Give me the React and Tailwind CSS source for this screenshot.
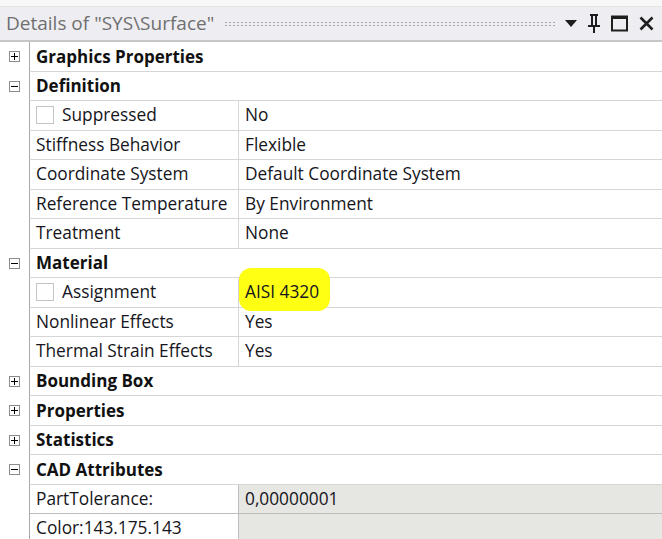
const rows = [
  { section: "Graphics Properties", open: false },
  { section: "Definition", open: true },
  { label: "Suppressed", value: "No", check: true },
  { label: "Stiffness Behavior", value: "Flexible" },
  { label: "Coordinate System", value: "Default Coordinate System" },
  { label: "Reference Temperature", value: "By Environment" },
  { label: "Treatment", value: "None" },
  { section: "Material", open: true },
  { label: "Assignment", value: "AISI 4320", check: true, marked: true },
  { label: "Nonlinear Effects", value: "Yes" },
  { label: "Thermal Strain Effects", value: "Yes" },
  { section: "Bounding Box", open: false },
  { section: "Properties", open: false },
  { section: "Statistics", open: false },
  { section: "CAD Attributes", open: true },
  { label: "PartTolerance:", value: "0,00000001", locked: true },
  { label: "Color:143.175.143", value: "", locked: true },
];

const ExpandBox = ({ open }) => (
  <div className="w-[11px] h-[11px] border border-[#8c8c8c] bg-white flex items-center justify-center">
    <svg width="9" height="9" viewBox="0 0 9 9">
      <rect x="1" y="4" width="7" height="1" fill="#000" />
      {!open && <rect x="4" y="1" width="1" height="7" fill="#000" />}
    </svg>
  </div>
);

const TitleIcons = () => (
  <div className="flex items-center gap-[11px] pr-[8px]">
    <svg width="12" height="7" viewBox="0 0 12 7">
      <path d="M0 0 H12 L6 7 Z" fill="#1e1e1e" />
    </svg>
    <svg width="12" height="19" viewBox="0 0 12 19">
      <rect x="2" y="0" width="8" height="2" fill="#1e1e1e" />
      <rect x="3" y="2" width="2" height="10" fill="#1e1e1e" />
      <rect x="7" y="2" width="2" height="10" fill="#1e1e1e" />
      <rect x="0" y="11" width="12" height="2" fill="#1e1e1e" />
      <rect x="5" y="13" width="2" height="6" fill="#1e1e1e" />
    </svg>
    <svg width="17" height="17" viewBox="0 0 17 17">
      <rect x="1" y="1.5" width="15" height="14" fill="none" stroke="#1e1e1e" strokeWidth="2" />
      <rect x="1" y="1" width="15" height="3" fill="#1e1e1e" />
    </svg>
    <svg width="15" height="15" viewBox="0 0 15 15">
      <path d="M1.5 1.5 L13.5 13.5 M13.5 1.5 L1.5 13.5" stroke="#1e1e1e" strokeWidth="2.6" />
    </svg>
  </div>
);

function Row({ row }) {
  if (row.section) {
    return (
      <div className="flex h-[29.5px]">
        <div className="w-[29px] shrink-0 flex items-center pl-[9px]">
          <ExpandBox open={row.open} />
        </div>
        <div className="flex-1 flex items-center border-l border-[#a8a8a8] border-b border-b-[#d6d6d6] pl-[6px] font-bold text-[17px] text-[#111]">
          {row.section}
        </div>
      </div>
    );
  }
  const line = row.locked ? "border-[#bdbdbd]" : "border-[#d6d6d6]";
  return (
    <div className="flex h-[29.5px]">
      <div className="w-[29px] shrink-0" />
      <div className={`flex-1 flex border-l border-l-[#a8a8a8] border-b ${line}`}>
        <div className={`w-[209px] shrink-0 flex items-center pl-[6px] border-r ${line}`}>
          {row.check && (
            <span className="w-[18px] h-[18px] border border-[#c4c4c4] bg-white mr-[8px]" />
          )}
          {row.label}
        </div>
        <div className={`relative flex-1 flex items-center pl-[6px] ${row.locked ? "bg-[#e6e6e3]" : ""}`}>
          {row.marked && (
            <span className="absolute left-0 top-[-10px] w-[91px] h-[43px] rounded-[12px] bg-[#ffff14] z-10" />
          )}
          <span className="relative z-20">{row.value}</span>
        </div>
      </div>
    </div>
  );
}

export default function App() {
  return (
    <div className="w-[662px] h-[539px] overflow-hidden bg-white text-[17.3px] text-[#151520] font-['Open_Sans',sans-serif]">
      <div className="h-[7px] bg-[#f7f7f7] border-b border-[#e4e4e4]" />
      <div className="h-[35px] flex items-center bg-[#eeeef2] border-b-2 border-[#c6c6c6] pl-[6px]">
        <span className="text-[#6f6f6f] text-[19px] whitespace-nowrap">Details of "SYS\Surface"</span>
        <div className="flex-1 ml-[10px] mr-[10px] h-[6px] bg-[radial-gradient(#a8a8a8_0.9px,transparent_1px)] bg-[size:4px_3px]" />
        <TitleIcons />
      </div>
      {rows.map((r, i) => (
        <Row key={i} row={r} />
      ))}
    </div>
  );
}
